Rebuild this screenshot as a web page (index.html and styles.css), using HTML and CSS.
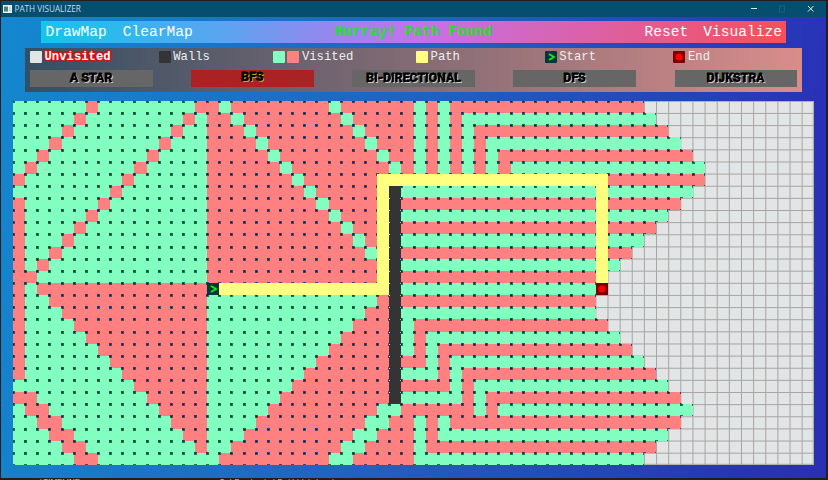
FILE: index.html
```html
<!DOCTYPE html>
<html lang="en">
<head>
<meta charset="utf-8">
<title>PATH VISUALIZER</title>
<link rel="stylesheet" href="styles.css">
</head>
<body>
<div class="window">
  <header class="titlebar">
    <svg class="app-icon" width="9" height="8" viewBox="0 0 9 8"><rect width="9" height="8" fill="#eef3f2"/><rect x="1" y="1.5" width="4" height="5" fill="#438a70"/><rect x="6" y="1.5" width="2" height="5" fill="#c8d4d1"/></svg>
    <span class="title">PATH VISUALIZER</span>
    <svg class="controls" width="70" height="15" viewBox="0 0 70 15" fill="none"><path d="M4 7.5h6" stroke="#dce8ee"/><rect x="32.5" y="5" width="5" height="6" stroke="#1d5c7e"/><path d="M61 5l5.5 5.5M66.500 5L61 10.500" stroke="#e6eff4"/></svg>
  </header>
  <main class="content">
    <nav class="menu">
      <span class="item">DrawMap</span><span class="item clear">ClearMap</span>
      <span class="status">Hurray! Path Found</span>
      <span class="item">Reset</span><span class="item visualize">Visualize</span>
    </nav>
    <section class="panel">
      <div class="legend">
        <div class="entry unvisited"><i class="swatch empty"></i><span>Unvisited</span></div>
        <div class="entry"><i class="swatch wall"></i><span>Walls</span></div>
        <div class="entry double"><i class="swatch green"></i><i class="swatch pink"></i><span>Visited</span></div>
        <div class="entry"><i class="swatch path"></i><span>Path</span></div>
        <div class="entry"><svg class="mark" viewBox="0 0 12 12"><rect width="12" height="12" fill="#04363d"/><path d="M4 3l5 3-5 3" fill="none" stroke="#0f0" stroke-width="1.6"/></svg><span>Start</span></div>
        <div class="entry"><svg class="mark" viewBox="0 0 12 12"><rect width="12" height="12" fill="#780000"/><circle cx="6" cy="6" r="3.6" fill="#f00"/></svg><span>End</span></div>
      </div>
      <div class="algorithms">
        <div class="algo"><span>A STAR</span></div>
        <div class="algo active"><span>BFS</span></div>
        <div class="algo"><span>BI-DIRECTIONAL</span></div>
        <div class="algo"><span>DFS</span></div>
        <div class="algo"><span>DIJKSTRA</span></div>
      </div>
    </section>
    <svg id="board" class="board" width="801" height="364" viewBox="0 0 801 364"></svg>
  </main>
</div>
<footer class="behind"><span class="tab">/ TIMELINE</span><span class="console">D:\Projects\Path\bin\main</span></footer>
<script src="board.js"></script>
</body>
</html>
```
FILE: styles.css
```css
* { box-sizing: border-box; }
body { margin: 0; width: 828px; height: 480px; overflow: hidden; background: #211f1c; padding: 1px 2px 0 1px; }
.window { height: 477px; background: linear-gradient(100deg, #1388cf, #2060c2 50%, #2932b7 92%, #2a2fb2); }
.titlebar { height: 15.500px; background: #064e70; display: flex; align-items: center; padding-left: 2px; }
.title { font: 8.2px/15px "Open Sans", sans-serif; color: #c5dbe5; margin-left: 2.500px; white-space: nowrap; }
.controls { margin-left: auto; margin-right: 9px; }
.content { padding: 4.500px 0 0 12px; }
.menu { width: 745px; height: 22px; margin-left: 28px; padding: 0 4px 0 4.500px; display: flex; background: linear-gradient(90deg, #12c6eb, #5ca3f0 25%, #c471ed 50%, #f64f59); font: 14.580px/23px "Liberation Mono", monospace; color: #fff; white-space: nowrap; }
.clear { margin-left: 16px; }
.status { margin-left: 142px; margin-right: auto; color: #1ce51c; font-weight: bold; }
.visualize { margin-left: 15px; }
.panel { width: 777px; height: 44px; margin: 5px 0 0 12px; padding: 2px 5px 0; background: linear-gradient(90deg, #344f62, #836b74 50%, #d98d8b); }
.legend { display: grid; grid-template-columns: repeat(6, 128.700px); height: 20px; font: 12.250px/14px "Liberation Mono", monospace; color: #eee; }
.entry { display: flex; height: 14px; white-space: nowrap; gap: 2.500px; }
.double { margin-left: -14.500px; }
.swatch, .mark { width: 12px; height: 12px; flex: none; margin-top: .5px; border-radius: 1px; }
.empty { background: #e1e5e6; }
.wall { background: #343434; }
.green { background: #82ffc0; }
.pink { background: #ff8080; }
.path { background: #ffff80; }
.unvisited span { color: #fff; font-weight: bold; text-shadow: 0 0 1px #f00, 1px 0 1px #f00, -1px 0 1px #f00, 0 1px 1px #f00, 0 -1px 1px #f00, 0 0 2px #f00, 0 0 2px #f00; }
.algorithms { display: flex; justify-content: space-between; }
.algo { width: 122.500px; height: 17px; background: #666; text-align: center; font: 900 12.300px/17px Roboto, sans-serif; letter-spacing: -.05px; color: #000; -webkit-text-stroke: 1px #000; text-shadow: 1px 1px 0 #ccc; paint-order: stroke fill; white-space: nowrap; }
.active { background: #aa2223; text-shadow: 1px 1px 0 #d2a800; line-height: 15px; }
.board { display: block; margin-top: 9px; }
.behind { height: 2px; overflow: hidden; display: flex; background: #211f1c; color: #ccc; font: 8px/8px "Liberation Sans", sans-serif; }
.tab { margin-left: 38px; width: 181px; }
.console { font-family: "Liberation Mono", monospace; }
```
FILE: board.js
```javascript
const COLS = 66, ROWS = 30, W = 801 / COLS, H = 364 / ROWS;
const COLORS = { g: '#82ffc0', p: '#ff8080', y: '#ffff80', w: '#343434' };
const grid = Array.from({ length: ROWS }, () => Array(COLS).fill(''));
const fill = (r, from, to, type) => { for (let c = from; c <= to; c++) grid[r][c] = type; };

// last visited column (exclusive) of each row
const reach = [52,53,54,55,56,57,57,56,55,54,53,52,51,50,48,48,48,48,49,50,51,52,53,54,55,56,55,54,53,52];
// alternating run starts right of the wall; the first run's type leads
const upper = ['p g33 p34 g35 p36', 'p g33 p34 g35 p36 g37', 'p g33 p34 g35 p36 g37 p38',
  'p g33 p34 g35 p36 g37 p38 g39', 'p g33 p34 g35 p36 g37 p38 g39 p40', 'p g33 p34 g35 p36 g37 p38 g39 p40 g41'];
const lower = ['g p33', 'g p33 g34', 'g p33 g34 p35', 'p g34 p35 g36', 'g p35 g36 p37', 'p g36 p37 g38',
  'g p37 g38 p39', 'p g38 p39 g40', 'p g33 p34 g35 p36', 'p g33 p34 g35', 'p g33 p34', 'p g33'];

for (let r = 0; r < ROWS; r++) {
  if (r < 15) {
    fill(r, 0, 15, 'g'); fill(r, 16, 31, 'p');
    grid[r][15 - r] = 'p';
    if (r < 7) grid[r][6 - r] = 'p';
    if (r < 13) grid[r][17 + r] = 'g';
    if (r < 6) grid[r][26 + r] = 'g';
  } else {
    fill(r, 0, 15, 'g'); fill(r, Math.max(r - 13, 2), 15, 'p');
    fill(r, 16, 45 - r, 'g'); fill(r, 46 - r, 31, 'p');
    if (r > 23) fill(r, r - 24, r - 23, 'p');
    if (r > 24) fill(r, 55 - r, 56 - r, 'g');
  }
  if (r > 7 && r < 23) grid[r][0] = 'p';
  const runs = r < 6 ? upper[r] : r > 17 ? lower[r - 18] : r % 2 ? 'g' : 'p';
  runs.split(' ').forEach(run => fill(r, Number(run.slice(1)) || 32, reach[r] - 1, run[0]));
}
for (let r = 6; r < 16; r++) grid[r][30] = 'y';
for (let r = 6; r < 15; r++) grid[r][48] = 'y';
fill(6, 30, 48, 'y');
fill(15, 17, 30, 'y');
for (let r = 7; r < 25; r++) grid[r][31] = 'w';

const rect = (x, y, w, h, f) => `<rect x="${x.toFixed(2)}" y="${y.toFixed(2)}" width="${w}" height="${h}" fill="${f}"/>`;
let lines = '', cells = '', dots = '', cores = '', overlay = '';
for (let c = 0; c <= COLS; c++) lines += rect(Math.min(c * W, 800) - .2, 0, 1, 364, '#aaa4a2');
for (let r = 0; r <= ROWS; r++) lines += rect(0, Math.min(r * H, 363) - .2, 801, 1, '#aaa4a2');
for (let r = 0; r < ROWS; r++) for (let c = 0; c < COLS; c++) {
  const t = grid[r][c];
  if (!t) continue;
  const x = Math.round(c * W), y = Math.round(r * H);
  const w = Math.round((c + 1) * W) - x, h = Math.round((r + 1) * H) - y;
  const box = rect(x, y, w, h, COLORS[t]);
  if (t === 'y' || t === 'w') { overlay += box; continue; }
  cells += box;
  const a = t === 'g' ? '#18794f' : '#71402f', b = t === 'g' ? '#18794f' : '#2846a8';
  dots += rect(x, y, 2, 2, a) + rect(x + w - 1, y, 1, 2, b) + rect(x, y + h - 1, 2, 1, b) + rect(x + w - 1, y + h - 1, 1, 1, a);
  cores += rect(x, y, 1, 1, '#041a28') + `<rect x="${x - 1}" y="${y - 1}" width="2" height="2" fill="#06283a" opacity=".4"/>`;
}
for (let r = 8; r < 25; r++) {
  const y = Math.round(r * H);
  overlay += rect(Math.round(31 * W), y, 1, 1, '#ddd') + rect(Math.round(32 * W) - 1, y, 1, 1, '#bbb');
}
const mark = (c, r, body) => `<g transform="translate(${Math.round(c * W)} ${Math.round(r * H)})">${body}</g>`;
overlay += mark(16, 15, '<rect width="12" height="12" fill="#04363d"/><path d="M4 3l5 3-5 3" fill="none" stroke="#0f0" stroke-width="1.6"/>');
overlay += mark(48, 15, '<rect width="12" height="12" fill="#780000"/><circle cx="6" cy="6" r="3.6" fill="#f00"/>');
document.getElementById('board').innerHTML =
  `<rect width="801" height="364" fill="#e1e5e6"/>${lines}<g shape-rendering="crispEdges">${cells}${dots}${cores}</g>${overlay}`;
```
